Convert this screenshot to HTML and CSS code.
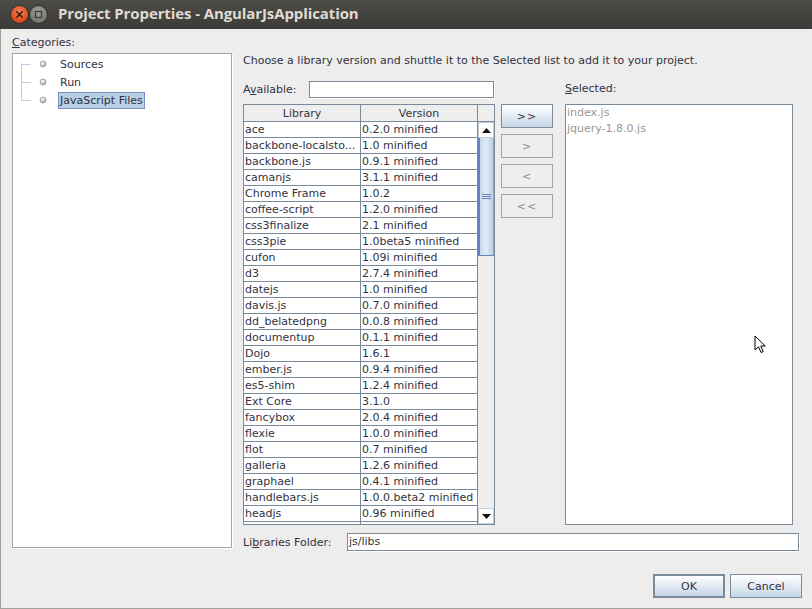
FILE: index.html
```html
<!DOCTYPE html>
<html>
<head>
<meta charset="utf-8">
<link rel="stylesheet" href="styles.css">
</head>
<body>
<div class="window">
  <div class="titlebar">
    <span class="tb-btn tb-close"><svg width="17" height="17" viewBox="0 0 17 17"><path d="M5.8 5.8 L11.2 11.2 M11.2 5.8 L5.8 11.2" stroke="#3a1a0c" stroke-width="1.6" stroke-linecap="round"/></svg></span>
    <span class="tb-btn tb-min"><svg width="17" height="17" viewBox="0 0 17 17"><rect x="5.5" y="5.5" width="6" height="6" fill="none" stroke="#3b3a36" stroke-width="1.3"/></svg></span>
    <span class="title">Project Properties - AngularJsApplication</span>
  </div>
  <div class="body">
    <div class="main">
      <div class="left">
        <div class="label"><u>C</u>ategories:</div>
        <div class="tree">
          <div class="node"><svg class="branch" width="37" height="18" viewBox="0 0 37 18"><path d="M0.5 8 V18 M0 9.5 H10" stroke="#b8cfe5"/><circle cx="22" cy="9" r="3" fill="url(#g)" stroke="#9a9a9a" stroke-width="0.8"/><defs><radialGradient id="g" cx="0.4" cy="0.35" r="0.7"><stop offset="0" stop-color="#fff"/><stop offset="1" stop-color="#9e9e9e"/></radialGradient></defs></svg><span class="nlabel">Sources</span></div>
          <div class="node"><svg class="branch" width="37" height="18" viewBox="0 0 37 18"><path d="M0.5 0 V18 M0 9.5 H10" stroke="#b8cfe5"/><circle cx="22" cy="9" r="3" fill="url(#g)" stroke="#9a9a9a" stroke-width="0.8"/></svg><span class="nlabel">Run</span></div>
          <div class="node"><svg class="branch" width="37" height="18" viewBox="0 0 37 18"><path d="M0.5 0 V10 M0 9.5 H10" stroke="#b8cfe5"/><circle cx="22" cy="9" r="3" fill="url(#g)" stroke="#9a9a9a" stroke-width="0.8"/></svg><span class="nlabel sel">JavaScript Files</span></div>
        </div>
      </div>
      <div class="right">
        <div class="intro">Choose a library version and shuttle it to the Selected list to add it to your project.</div>
        <div class="shuttle">
          <div class="avail-row">
            <span class="avail-label">A<u>v</u>ailable:</span>
            <span class="field avail-field"></span>
          </div>
          <div></div>
          <div class="sel-label"><u>S</u>elected:</div>

          <div class="table">
            <div class="grid">
              <div class="th">Library</div><div class="th">Version</div><div class="th corner"></div>
            </div>
            <div class="tbody">
              <div class="rows">
                <div class="td">ace</div><div class="td">0.2.0 minified</div>
                <div class="td">backbone-localsto...</div><div class="td">1.0 minified</div>
                <div class="td">backbone.js</div><div class="td">0.9.1 minified</div>
                <div class="td">camanjs</div><div class="td">3.1.1 minified</div>
                <div class="td">Chrome Frame</div><div class="td">1.0.2</div>
                <div class="td">coffee-script</div><div class="td">1.2.0 minified</div>
                <div class="td">css3finalize</div><div class="td">2.1 minified</div>
                <div class="td">css3pie</div><div class="td">1.0beta5 minified</div>
                <div class="td">cufon</div><div class="td">1.09i minified</div>
                <div class="td">d3</div><div class="td">2.7.4 minified</div>
                <div class="td">datejs</div><div class="td">1.0 minified</div>
                <div class="td">davis.js</div><div class="td">0.7.0 minified</div>
                <div class="td">dd_belatedpng</div><div class="td">0.0.8 minified</div>
                <div class="td">documentup</div><div class="td">0.1.1 minified</div>
                <div class="td">Dojo</div><div class="td">1.6.1</div>
                <div class="td">ember.js</div><div class="td">0.9.4 minified</div>
                <div class="td">es5-shim</div><div class="td">1.2.4 minified</div>
                <div class="td">Ext Core</div><div class="td">3.1.0</div>
                <div class="td">fancybox</div><div class="td">2.0.4 minified</div>
                <div class="td">flexie</div><div class="td">1.0.0 minified</div>
                <div class="td">flot</div><div class="td">0.7 minified</div>
                <div class="td">galleria</div><div class="td">1.2.6 minified</div>
                <div class="td">graphael</div><div class="td">0.4.1 minified</div>
                <div class="td">handlebars.js</div><div class="td">1.0.0.beta2 minified</div>
                <div class="td">headjs</div><div class="td">0.96 minified</div>
                <div class="td"></div><div class="td"></div>
              </div>
              <div class="scrollbar">
                <div class="arrow"><svg width="9" height="5" viewBox="0 0 9 5"><path d="M0 5 L4.5 0 L9 5 Z" fill="#111"/></svg></div>
                <div class="thumb"><span class="grip"></span><span class="grip"></span><span class="grip"></span></div>
                <div class="track"></div>
                <div class="arrow"><svg width="9" height="5" viewBox="0 0 9 5"><path d="M0 0 L4.5 5 L9 0 Z" fill="#111"/></svg></div>
              </div>
            </div>
          </div>

          <div class="buttons">
            <div class="btn sbtn">&gt;&gt;</div>
            <div class="btn sbtn dis">&gt;</div>
            <div class="btn sbtn dis">&lt;</div>
            <div class="btn sbtn dis">&lt;&lt;</div>
          </div>

          <div class="list">
            <div class="item">index.js</div>
            <div class="item">jquery-1.8.0.js</div>
          </div>
        </div>
        <div class="folder-row">
          <span class="folder-label">Li<u>b</u>raries Folder:</span>
          <span class="field folder-field">js/libs</span>
        </div>
      </div>
    </div>
    <div class="footer">
      <div class="btn fbtn default">OK</div>
      <div class="btn fbtn">Cancel</div>
    </div>
  </div>
  <svg class="cursor" width="13" height="20" viewBox="0 0 13 20"><path d="M1 1 L1 15 L4.5 11.8 L7 17.5 L9.2 16.5 L6.8 11 L11.3 11 Z" fill="#fff" stroke="#000" stroke-width="1" stroke-linejoin="round"/></svg>
</div>
</body>
</html>
```
FILE: styles.css
```css
html, body {
  margin: 0;
  padding: 0;
}
body {
  width: 812px;
  height: 609px;
  overflow: hidden;
  background: #ededed;
  font-family: "DejaVu Sans", sans-serif;
  font-size: 11px;
  color: #333340;
}
u { text-decoration: underline; text-underline-offset: 1px; }
.window {
  position: relative;
  width: 812px;
  height: 609px;
  box-sizing: border-box;
  border-left: 1px solid #a3a19b;
  border-bottom: 1px solid #a3a19b;
  display: flex;
  flex-direction: column;
}
.titlebar {
  height: 29px;
  margin-left: -1px;
  background: linear-gradient(#4d4c47, #3c3b37);
  display: flex;
  align-items: center;
  padding-left: 11px;
  flex: none;
}
.tb-btn {
  width: 17px;
  height: 17px;
  border-radius: 50%;
  display: inline-flex;
  margin-right: 1px;
}
.tb-close {
  background: radial-gradient(circle at 50% 35%, #f5855a, #df4f22 60%, #b83c17);
  box-shadow: 0 0 0 1px #2f2e2a;
}
.tb-min {
  background: radial-gradient(circle at 50% 35%, #a4a29b, #7b7973 65%, #62605b);
  box-shadow: 0 0 0 1px #2f2e2a;
  margin-left: 1px;
}
.title {
  margin-left: 10px;
  margin-bottom: 3px;
  color: #dfdbd2;
  font-family: "Open Sans", sans-serif;
  font-weight: bold;
  font-size: 15px;
  letter-spacing: -0.1px;
}
.body {
  flex: 1;
  display: flex;
  flex-direction: column;
}
.main {
  display: flex;
  padding: 6px 0 0 11px;
}
.left {
  width: 220px;
  display: flex;
  flex-direction: column;
}
.label {
  height: 16px;
  line-height: 16px;
  margin-bottom: 2px;
}
.tree {
  height: 495px;
  box-sizing: border-box;
  background: #fff;
  border: 1px solid #a4a4a4;
  box-shadow: 1px 1px 0 #fff;
  padding: 1px 0 0 8px;
}
.node {
  height: 18px;
  display: flex;
  align-items: center;
}
.branch { display: block; flex: none; }
.nlabel {
  padding: 0 1px 0 1px;
  border: 1px solid transparent;
  height: 15px;
  line-height: 15px;
}
.nlabel.sel {
  background: #b8cfe5;
  border-color: #7a8fbf;
}
.right {
  margin-left: 11px;
  width: 557px;
  display: flex;
  flex-direction: column;
}
.intro {
  margin-top: 18px;
  height: 16px;
  line-height: 16px;
}
.shuttle {
  margin-top: 11px;
  display: grid;
  grid-template-columns: 252px 52px 234px;
  column-gap: 6px;
  grid-template-rows: 18px 421px;
  row-gap: 6px;
}
.shuttle > .list { margin-left: 6px; }
.avail-row {
  display: flex;
  align-items: center;
}
.avail-label {
  width: 66px;
}
.field {
  box-sizing: border-box;
  background: #fff;
  border: 1px solid #7a8a99;
  box-shadow: 1px 1px 0 #fff;
  display: block;
}
.avail-field {
  width: 185px;
  height: 17px;
}
.sel-label {
  margin-left: 6px;
  line-height: 18px;
}
.table {
  box-sizing: border-box;
  border: 1px solid #7a8a99;
  background: #fff;
  display: flex;
  flex-direction: column;
  overflow: hidden;
}
.grid {
  display: grid;
  grid-template-columns: 117px 117px 16px;
  flex: none;
}
.th {
  height: 16px;
  line-height: 17px;
  text-align: center;
  background: #eeeeee;
  border-right: 1px solid #7a8a99;
  border-bottom: 1px solid #7a8a99;
}
.th.corner { border-right: none; }
.tbody {
  display: flex;
  flex: 1;
  min-height: 0;
}
.rows {
  width: 234px;
  display: grid;
  grid-template-columns: 117px 117px;
  grid-auto-rows: 16px;
  align-content: start;
  overflow: hidden;
}
.td {
  box-sizing: border-box;
  height: 16px;
  line-height: 15px;
  padding-left: 1px;
  border-right: 1px solid #7a8a99;
  border-bottom: 1px solid #7a8a99;
  white-space: nowrap;
  overflow: hidden;
  background: #fff;
}
.scrollbar {
  width: 16px;
  background: #eeeeee;
  display: flex;
  flex-direction: column;
}
.arrow {
  height: 16px;
  box-sizing: border-box;
  border: 1px solid #c8cdd3;
  background: #fff;
  display: flex;
  align-items: center;
  justify-content: center;
  flex: none;
}
.thumb {
  height: 118px;
  box-sizing: border-box;
  border-left: 2px solid #6382bf;
  border-right: 1px solid #8da4c9;
  border-bottom: 1px solid #6382bf;
  background: linear-gradient(90deg, #c6d7ea, #e4ecf5 45%, #b8cfe5);
  display: flex;
  flex-direction: column;
  align-items: center;
  justify-content: center;
  gap: 1px;
  flex: none;
}
.grip {
  width: 9px;
  height: 1px;
  background: #6382bf;
}
.track { flex: 1; }
.buttons {
  display: flex;
  flex-direction: column;
  gap: 6px;
}
.btn {
  box-sizing: border-box;
  display: flex;
  align-items: center;
  justify-content: center;
  border: 1px solid #7a8a99;
  background: linear-gradient(#ffffff, #e9eff6 40%, #c5d6e8);
  color: #333340;
}
.sbtn {
  height: 24px;
  letter-spacing: 1px;
}
.sbtn.dis {
  background: #eeeeee;
  border-color: #a3a3a3;
  color: #8c8c8c;
}
.list {
  box-sizing: border-box;
  border: 1px solid #7a8a99;
  background: #fff;
  padding: 0 0 0 1px;
}
.item {
  height: 16px;
  line-height: 16px;
  color: #999999;
}
.folder-row {
  margin-top: 8px;
  display: flex;
  align-items: center;
}
.folder-label { width: 104px; }
.folder-field {
  width: 452px;
  height: 18px;
  line-height: 16px;
  padding-left: 1px;
}
.footer {
  margin-top: 23px;
  display: flex;
  justify-content: flex-end;
  gap: 5px;
  padding-right: 10px;
}
.fbtn {
  width: 72px;
  height: 24px;
}
.fbtn.default {
  border: 2px solid #7a8a99;
}
.cursor {
  position: absolute;
  left: 753px;
  top: 335px;
}
```
